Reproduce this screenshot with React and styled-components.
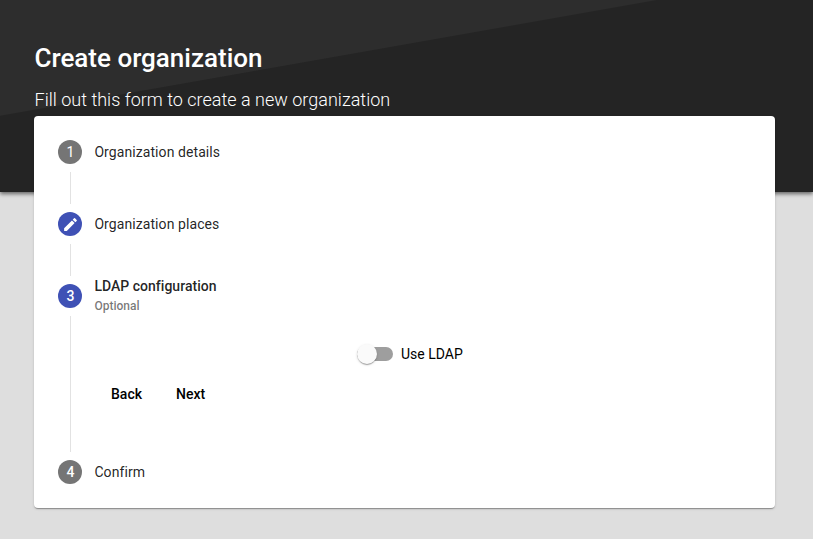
import React, { useState } from 'react';
import styled, { createGlobalStyle } from 'styled-components';

const GlobalStyle = createGlobalStyle`
  *, *::before, *::after { box-sizing: border-box; }
  body {
    margin: 0;
    background: #dedede;
    font-family: Roboto, "Liberation Sans", sans-serif;
    overflow: hidden;
  }
`;

const Page = styled.main`
  min-height: 539px;
  background: #dedede;
`;

const Hero = styled.header`
  height: 192px;
  padding: 42px 34.5px 0;
  color: #fff;
  background: linear-gradient(170deg, #2d2d2d 113.5px, #242424 114.5px);
  box-shadow: 0 2px 4px rgba(0, 0, 0, 0.55);
`;

const Title = styled.h1`
  margin: 0;
  font-size: 26px;
  line-height: 32px;
  font-weight: 500;
`;

const Subtitle = styled.p`
  margin: 14px 0 0;
  font-size: 18px;
  line-height: 24px;
  font-weight: 300;
  letter-spacing: 0.01px;
`;

const Card = styled.section`
  position: relative;
  height: 392px;
  margin: -76px 38px 0 34px;
  padding: 24px;
  background: #fff;
  border-radius: 4px;
  box-shadow: 0 2px 1px -1px rgba(0, 0, 0, 0.2),
    0 1px 1px 0 rgba(0, 0, 0, 0.14), 0 1px 3px 0 rgba(0, 0, 0, 0.12);
`;

const StepHeader = styled.div`
  display: flex;
  align-items: center;
  gap: 12.4px;
  height: 24px;
`;

const StepIcon = styled.span`
  display: flex;
  flex: none;
  align-items: center;
  justify-content: center;
  width: 24px;
  height: 24px;
  border-radius: 50%;
  padding-left: 1px;
  background: ${(p) => (p.$accent ? '#3f51b5' : '#757575')};
  color: #fff;
  font-size: 14px;
  font-weight: ${(p) => (p.$strong ? 500 : 400)};
`;

const StepText = styled.div`
  display: flex;
  flex-direction: column;
`;

const StepLabel = styled.span`
  font-size: 14px;
  line-height: 20px;
  font-weight: ${(p) => (p.$active ? 500 : 400)};
  letter-spacing: ${(p) => (p.$active ? 0.02 : 0.08)}px;
  color: rgba(0, 0, 0, 0.87);
`;

const OptionalLabel = styled.span`
  font-size: 12px;
  line-height: 20px;
  font-weight: 500;
  color: rgba(0, 0, 0, 0.54);
`;

const StepBody = styled.div`
  height: ${(p) => p.$height || 32}px;
  margin: 8px 0 8px 12px;
  padding-left: 24px;
  border-left: 1px solid #e2e2e2;
`;

const ToggleLabel = styled.label`
  display: flex;
  align-items: center;
  width: max-content;
  margin-left: 262px;
  padding-top: 28px;
  gap: 8px;
  font-size: 14px;
  line-height: 20px;
  color: #000;
  cursor: pointer;
`;

const HiddenInput = styled.input`
  position: absolute;
  opacity: 0;
  width: 1px;
  height: 1px;
  margin: 0;
`;

const Track = styled.span`
  position: relative;
  width: 36px;
  height: 14px;
  border-radius: 8px;
  background: ${(p) => (p.$on ? '#9fa8da' : '#9e9e9e')};
`;

const Thumb = styled.span`
  position: absolute;
  top: -3px;
  left: ${(p) => (p.$on ? 16 : 0)}px;
  width: 20px;
  height: 20px;
  border-radius: 50%;
  background: ${(p) => (p.$on ? '#3f51b5' : '#fafafa')};
  box-shadow: 0 2px 1px -1px rgba(0, 0, 0, 0.2),
    0 1px 1px 0 rgba(0, 0, 0, 0.14), 0 1px 3px 0 rgba(0, 0, 0, 0.12);
`;

const Actions = styled.div`
  display: flex;
  gap: 2px;
  margin-top: 12px;
`;

const TextButton = styled.button`
  height: 36px;
  padding: 0 16px;
  border: 0;
  border-radius: 4px;
  background: transparent;
  color: #000;
  font: 500 14px/36px Roboto, "Liberation Sans", sans-serif;
  cursor: pointer;
`;

function Pencil() {
  return (
    <svg width="17" height="17" viewBox="0 0 24 24" fill="currentColor" aria-hidden="true">
      <path d="M3 17.25V21h3.75L17.81 9.94l-3.75-3.75L3 17.25zM20.71 7.04a1 1 0 0 0 0-1.41l-2.34-2.34a1 1 0 0 0-1.41 0l-1.83 1.83 3.75 3.75 1.83-1.83z" />
    </svg>
  );
}

function Step({ icon, label, accent, active, strong, optional }) {
  return (
    <StepHeader>
      <StepIcon $accent={accent} $strong={strong}>{icon}</StepIcon>
      <StepText>
        <StepLabel $active={active}>{label}</StepLabel>
        {optional && <OptionalLabel>Optional</OptionalLabel>}
      </StepText>
    </StepHeader>
  );
}

export default function App() {
  const [useLdap, setUseLdap] = useState(false);
  return (
    <Page>
      <GlobalStyle />
      <Hero>
        <Title>Create organization</Title>
        <Subtitle>Fill out this form to create a new organization</Subtitle>
      </Hero>
      <Card>
        <Step icon="1" label="Organization details" />
        <StepBody />
        <Step icon={<Pencil />} label="Organization places" accent />
        <StepBody />
        <Step icon="3" label="LDAP configuration" accent active strong optional />
        <StepBody $height={136}>
          <ToggleLabel>
            <HiddenInput
              type="checkbox"
              checked={useLdap}
              onChange={(e) => setUseLdap(e.target.checked)}
            />
            <Track $on={useLdap}>
              <Thumb $on={useLdap} />
            </Track>
            Use LDAP
          </ToggleLabel>
          <Actions>
            <TextButton type="button">Back</TextButton>
            <TextButton type="button">Next</TextButton>
          </Actions>
        </StepBody>
        <Step icon="4" label="Confirm" strong />
      </Card>
    </Page>
  );
}
